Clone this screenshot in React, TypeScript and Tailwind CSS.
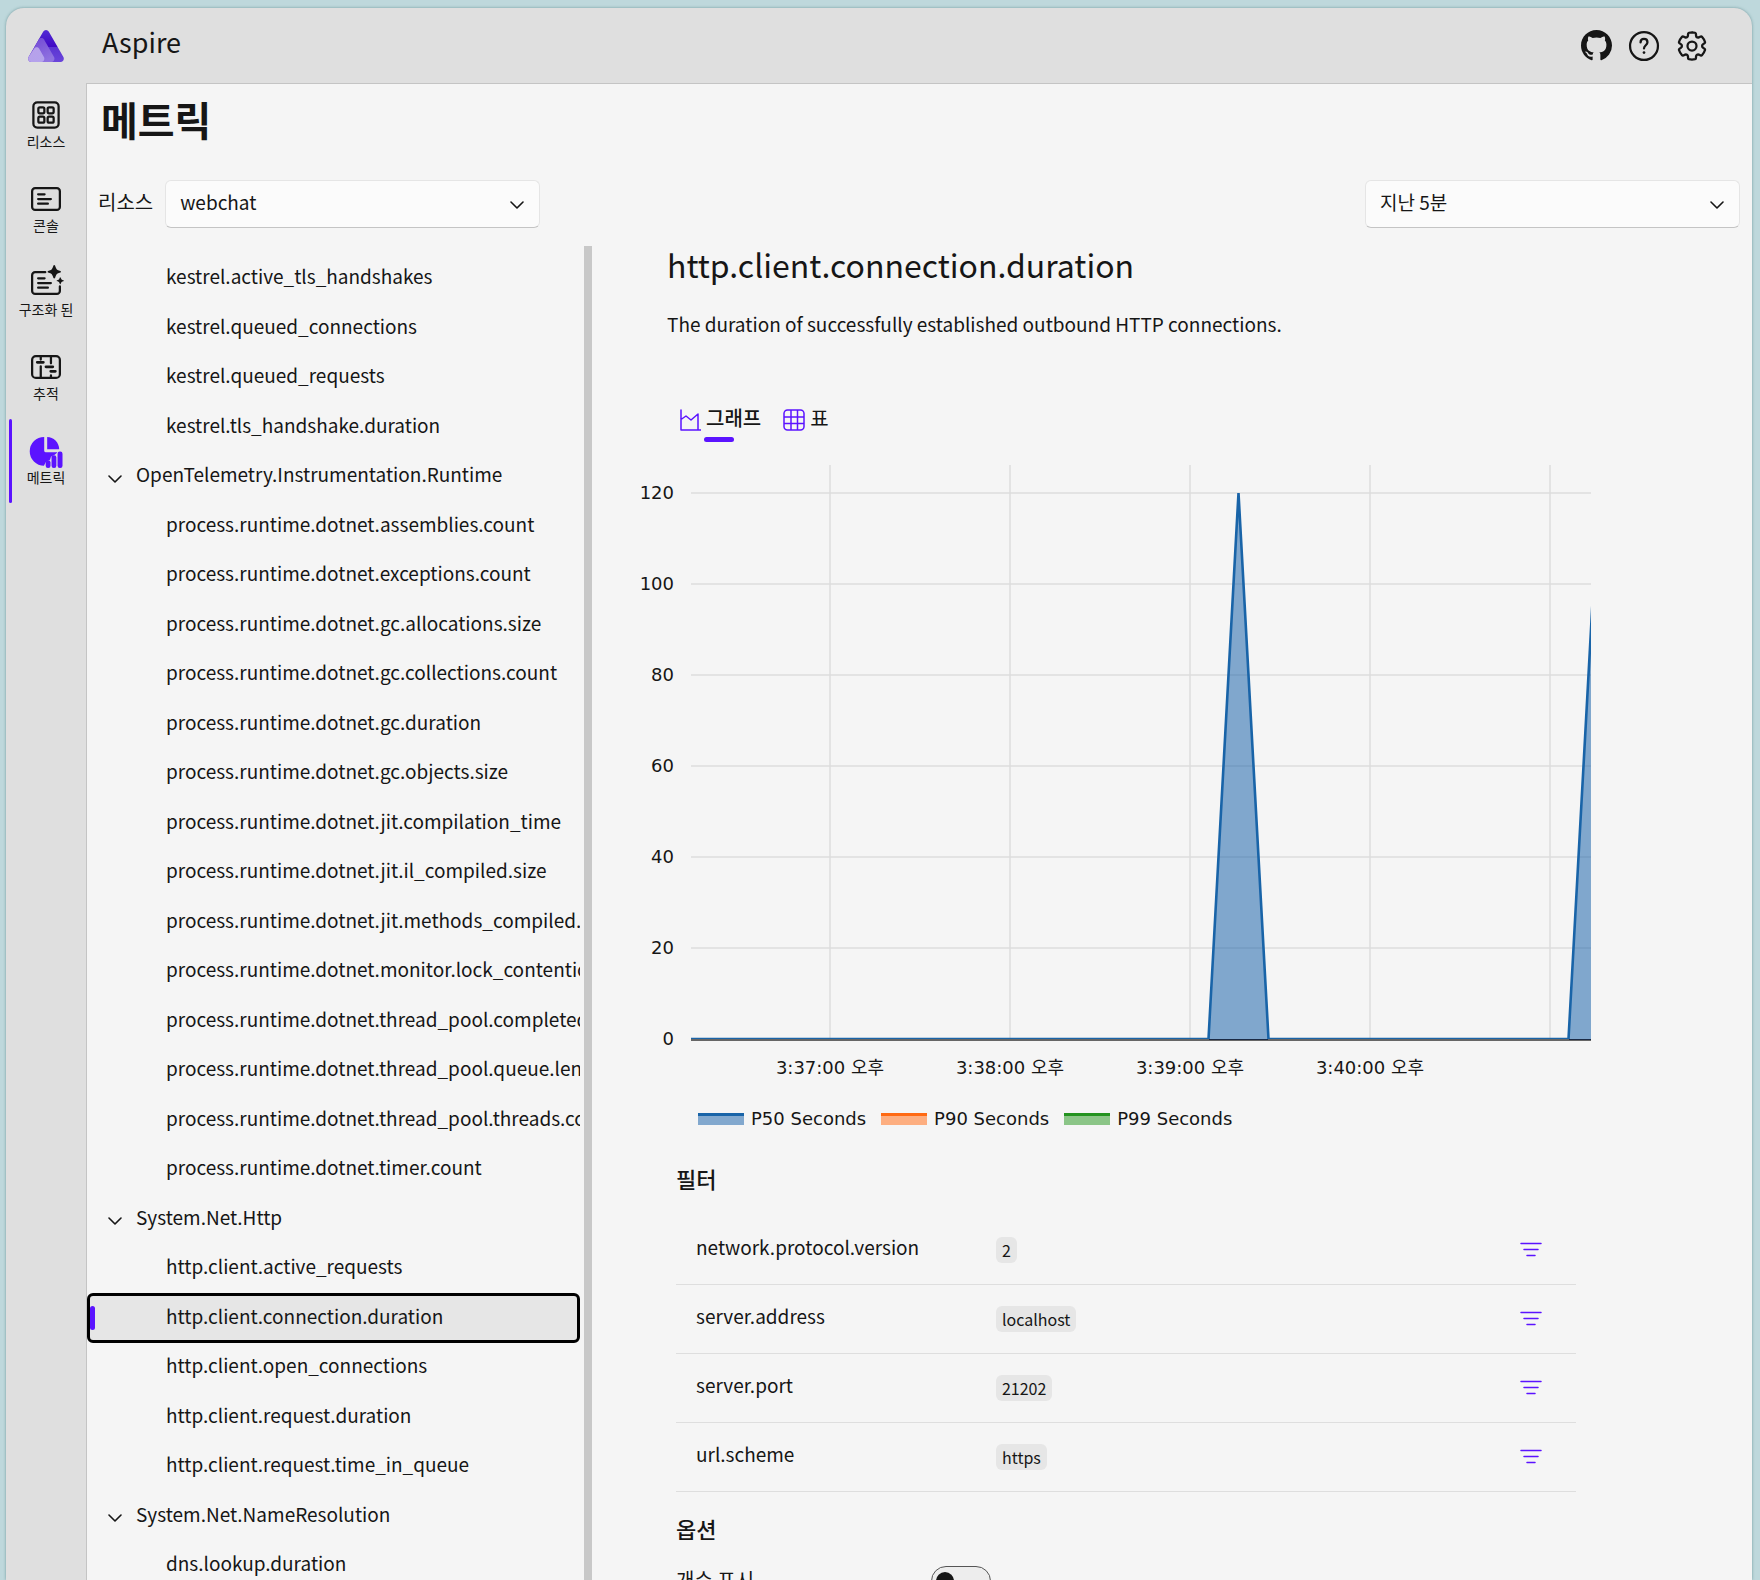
import type { ReactNode } from "react";
import { BsGithub } from "react-icons/bs";

type Row = { label: string; kind: "group" | "item"; selected?: boolean };

const group = (label: string): Row => ({ label, kind: "group" });
const item = (label: string, selected = false): Row => ({ label, kind: "item", selected });

const tree: Row[] = [
  item("kestrel.active_tls_handshakes"),
  item("kestrel.queued_connections"),
  item("kestrel.queued_requests"),
  item("kestrel.tls_handshake.duration"),
  group("OpenTelemetry.Instrumentation.Runtime"),
  item("process.runtime.dotnet.assemblies.count"),
  item("process.runtime.dotnet.exceptions.count"),
  item("process.runtime.dotnet.gc.allocations.size"),
  item("process.runtime.dotnet.gc.collections.count"),
  item("process.runtime.dotnet.gc.duration"),
  item("process.runtime.dotnet.gc.objects.size"),
  item("process.runtime.dotnet.jit.compilation_time"),
  item("process.runtime.dotnet.jit.il_compiled.size"),
  item("process.runtime.dotnet.jit.methods_compiled.count"),
  item("process.runtime.dotnet.monitor.lock_contention.count"),
  item("process.runtime.dotnet.thread_pool.completed_items.count"),
  item("process.runtime.dotnet.thread_pool.queue.length"),
  item("process.runtime.dotnet.thread_pool.threads.count"),
  item("process.runtime.dotnet.timer.count"),
  group("System.Net.Http"),
  item("http.client.active_requests"),
  item("http.client.connection.duration", true),
  item("http.client.open_connections"),
  item("http.client.request.duration"),
  item("http.client.request.time_in_queue"),
  group("System.Net.NameResolution"),
  item("dns.lookup.duration"),
];

const filters = [
  ["network.protocol.version", "2"],
  ["server.address", "localhost"],
  ["server.port", "21202"],
  ["url.scheme", "https"],
];

function Icon({ children, className = "size-9" }: { children: ReactNode; className?: string }) {
  return (
    <svg
      viewBox="0 0 24 24"
      className={className}
      fill="none"
      stroke="currentColor"
      strokeWidth="1.5"
      strokeLinecap="round"
      strokeLinejoin="round"
      aria-hidden="true"
    >
      {children}
    </svg>
  );
}

function Logo() {
  return (
    <svg viewBox="0 0 36 32" className="h-8 w-9" role="img" aria-label="Aspire">
      <defs>
        <linearGradient id="back" x1="0" y1="0" x2="0" y2="1">
          <stop offset="0" stopColor="#512bd4" />
          <stop offset="0.53" stopColor="#4008c4" />
          <stop offset="0.54" stopColor="#5b35d2" />
          <stop offset="1" stopColor="#6a45da" />
        </linearGradient>
        <linearGradient id="mid" x1="0" y1="0" x2="0.6" y2="1">
          <stop offset="0" stopColor="#6f45d8" />
          <stop offset="0.4" stopColor="#7c57d8" />
          <stop offset="1" stopColor="#8f72e0" />
        </linearGradient>
        <linearGradient id="front" x1="0" y1="0" x2="1" y2="1">
          <stop offset="0" stopColor="#b7a1ea" />
          <stop offset="1" stopColor="#b4a2ec" />
        </linearGradient>
      </defs>
      <path d="M15.3 1.6a3.1 3.1 0 0 1 5.4 0L35.4 27c1.2 2.2-.3 5-2.8 5H3.4C.9 32-.6 29.2.6 27z" fill="url(#back)" />
      <path d="M11 9.3c1.1-1.8 3.8-1.8 4.9 0L26 27c1.2 2.3-.2 5-2.6 5H3.4C.9 32-.6 29.2.6 27z" fill="url(#mid)" />
      <path d="M6.3 18.6c1.1-1.8 3.7-1.8 4.8 0L15.9 27c1.2 2.3-.2 5-2.6 5H3.4C.9 32-.6 29.2.6 27z" fill="url(#front)" />
    </svg>
  );
}

const ResourcesIcon = () => (
  <Icon>
    <rect x="3.6" y="3.6" width="16.8" height="16.8" rx="2.6" />
    <rect x="6.9" y="6.9" width="4" height="4" rx="1" />
    <rect x="13.1" y="6.9" width="4" height="4" rx="1" />
    <rect x="6.9" y="13.1" width="4" height="4" rx="1" />
    <rect x="13.1" y="13.1" width="4" height="4" rx="1" />
  </Icon>
);

const ConsoleIcon = () => (
  <Icon>
    <rect x="2.75" y="4.75" width="18.5" height="14.5" rx="2" />
    <path d="M6.75 8.9h4.3M6.75 12h8.5M6.75 15.1h6.5" />
  </Icon>
);

const StructuredIcon = () => (
  <Icon>
    <path d="M11.5 4.75H4.75a2 2 0 0 0-2 2v10.5a2 2 0 0 0 2 2h14.5a2 2 0 0 0 2-2v-3" />
    <path d="M6.75 8.9h4.3M6.75 12h8.5M6.75 15.1h6.5" />
    <path
      stroke="none"
      fill="currentColor"
      d="M17.5 0c.5 0 .6.5.8 1.100.5 1.400.9 2 2.300 2.500.8.300 1.400.4 1.400.9s-.6.600-1.400.9c-1.400.5-1.800 1.100-2.300 2.500-.2.600-.3 1.100-.8 1.100s-.6-.5-.8-1.100c-.5-1.400-.9-2-2.300-2.500C13.600 5.100 13 5 13 4.500s.6-.6 1.400-.9c1.400-.5 1.800-1.100 2.300-2.500.2-.6.300-1.100.8-1.100zM21.500 8.100c.3 0 .4.600.6 1.100s.4.600.9.800.9.200.9.500-.4.300-.9.500-.7.300-.9.800-.3 1.100-.6 1.100-.4-.6-.6-1.100-.4-.6-.9-.8-.9-.2-.9-.5.400-.3.900-.5.700-.3.900-.8.300-1.100.6-1.100z"
    />
  </Icon>
);

const TracesIcon = () => (
  <Icon>
    <rect x="2.75" y="4.75" width="18.5" height="14.5" rx="2.5" />
    <path d="M8.5 5v2M8.5 11.500V19M15.300 5v4.500M15.300 17.500V19" />
    <path d="M6.200 8.900h4M12 11.900h4.500M15.200 14.900h3" strokeWidth="1.900" />
  </Icon>
);

const MetricsIcon = () => (
  <Icon>
    <g stroke="none" fill="currentColor">
      <path d="M10.8 2.600v9.300c0 .5.400.9.900.9h7.900l-.4.500-1.400 1.200-2.500 1.300-.6 2-2.600 1.200-1.400 2.700v.1A9.600 9.600 0 0 1 10.800 2.600z" />
      <path d="M12.800 2.600c4.200 0 7.900 3.500 8 8.200h-8z" />
      <rect x="11.800" y="18.200" width="3.200" height="5.200" rx="1.500" />
      <rect x="15.700" y="14.900" width="3.200" height="8.500" rx="1.500" />
      <rect x="19.700" y="12.300" width="3.300" height="11.100" rx="1.500" />
    </g>
  </Icon>
);

const navItems = [
  { label: "리소스", icon: <ResourcesIcon /> },
  { label: "콘솔", icon: <ConsoleIcon /> },
  { label: "구조화 된", icon: <StructuredIcon /> },
  { label: "추적", icon: <TracesIcon /> },
  { label: "메트릭", icon: <MetricsIcon />, active: true },
];

function SideNav() {
  return (
    <nav className="flex w-20 shrink-0 flex-col">
      {navItems.map((n) => (
        <a
          key={n.label}
          href="#"
          aria-current={n.active ? "page" : undefined}
          className="relative flex h-[84px] flex-col items-center pt-[14px]"
        >
          {n.active && <span className="absolute top-0 left-[3px] h-full w-[3px] rounded-full bg-[#5b13ff]" />}
          <span className={n.active ? "text-[#5b13ff]" : ""}>{n.icon}</span>
          <span className="text-sm leading-4 whitespace-nowrap">{n.label}</span>
        </a>
      ))}
    </nav>
  );
}

function Chevron() {
  return (
    <svg viewBox="0 0 14 8" className="h-2 w-3.5" fill="none" stroke="currentColor" strokeWidth="1.6" strokeLinecap="round" strokeLinejoin="round" aria-hidden="true">
      <path d="M1 1l6 6 6-6" />
    </svg>
  );
}

function Select({ id, value, label }: { id: string; value: string; label?: string }) {
  return (
    <div className="relative h-12 w-[375px]">
      <select
        id={id}
        aria-label={label}
        className="h-full w-full appearance-none rounded-md border border-[#e5e5e5] border-b-[#c4c4c4] bg-[#fbfbfb] pr-10 pb-1 pl-3.5 text-[19px]"
      >
        <option>{value}</option>
      </select>
      <span className="pointer-events-none absolute top-[21px] right-4">
        <Chevron />
      </span>
    </div>
  );
}

function Tree() {
  return (
    <ul className="w-[497px] shrink-0 overflow-hidden pt-2 pr-1 text-[19px]">
      {tree.map((r) => (
        <li key={r.label} className="h-[49px] even:h-[50px]">
          {r.kind === "group" ? (
            <button type="button" aria-expanded="true" className="flex h-full w-full items-center gap-[14px] pl-[21px] text-left">
              <span className="pt-1">
                <Chevron />
              </span>
              <span className="pb-1 whitespace-nowrap">{r.label}</span>
            </button>
          ) : r.selected ? (
            <button
              type="button"
              aria-current="true"
              className="relative flex h-full w-full items-center overflow-hidden rounded-md border-[3px] border-black bg-[#e6e6e6] pl-[76px] text-left"
            >
              <span className="absolute left-0 h-6 w-[5px] rounded-sm bg-[#5b13ff]" />
              <span className="pb-1 whitespace-nowrap">{r.label}</span>
            </button>
          ) : (
            <button type="button" className="flex h-full w-full items-center overflow-hidden pl-[79px] text-left">
              <span className="pb-1 whitespace-nowrap">{r.label}</span>
            </button>
          )}
        </li>
      ))}
    </ul>
  );
}

const LEFT = 59;
const RIGHT = 959;
const BASE = 574;
const yTicks = [0, 20, 40, 60, 80, 100, 120];
const xTicks = [
  { x: 198, label: "3:37:00 오후" },
  { x: 378, label: "3:38:00 오후" },
  { x: 558, label: "3:39:00 오후" },
  { x: 738, label: "3:40:00 오후" },
  { x: 918, label: "" },
];
const yOf = (v: number) => BASE - v * 4.55;

function Chart() {
  return (
    <svg
      viewBox="0 0 960 620"
      className="block w-full font-['DejaVu_Sans','Noto_Sans_CJK_KR',sans-serif] text-lg"
      role="img"
      aria-label="http.client.connection.duration"
    >
      <defs>
        <clipPath id="plot">
          <rect x={LEFT} y="0" width={RIGHT - LEFT} height="577" />
        </clipPath>
      </defs>
      <g stroke="#dddddd" strokeWidth="1.5">
        {xTicks.map((t) => (
          <path key={t.x} d={`M${t.x} 0V${BASE}`} />
        ))}
        {yTicks.slice(1).map((v) => (
          <path key={v} d={`M${LEFT} ${yOf(v)}H${RIGHT}`} />
        ))}
      </g>
      <g clipPath="url(#plot)">
        <path d="M576.5 574L606.5 28L636.5 574zM936.5 574L966.5 28V574z" fill="#1f66ab" fillOpacity="0.55" />
        <path
          d="M59 574H576.5L606.5 28L636.5 574H936.5L966.5 28"
          fill="none"
          stroke="#1964a8"
          strokeWidth="2.6"
          strokeLinejoin="bevel"
        />
        <path d="M59 575H959" stroke="#666666" strokeWidth="2" />
        <path d="M577 574.5H636M937 574.5H959" stroke="#1b2a44" strokeWidth="1" />
      </g>
      <g fill="#161616">
        {yTicks.map((v) => (
          <text key={v} x="42" y={yOf(v) + 6} textAnchor="end">
            {v}
          </text>
        ))}
        {xTicks.map((t) => (
          <text key={t.x} x={t.x} y="609" textAnchor="middle">
            {t.label}
          </text>
        ))}
      </g>
    </svg>
  );
}

const legend = [
  { label: "P50 Seconds", style: "border-[#1964a8] bg-[#82a8ce]" },
  { label: "P90 Seconds", style: "border-[#ff6a13] bg-[#fdae80]" },
  { label: "P99 Seconds", style: "border-[#23931f] bg-[#8bc587]" },
];

function Filters() {
  return (
    <table className="mt-[21px] w-full text-[19px]">
      <tbody>
        {filters.map(([name, value]) => (
          <tr key={name} className="h-[69px] border-b border-[#dedede]">
            <th scope="row" className="w-1/3 pb-1 pl-5 text-left font-normal">
              {name}
            </th>
            <td className="pl-5">
              <span className="inline-block rounded-md bg-[#e6e6e6] px-1.5 text-base leading-[26px]">{value}</span>
            </td>
            <td className="w-20 pr-[33px] pb-1 text-right">
              <button type="button" aria-label={`${name} 필터`} className="align-middle text-[#5b13ff]">
                <svg viewBox="0 0 24 18" className="h-[18px] w-6" fill="none" stroke="currentColor" strokeWidth="1.5" strokeLinecap="round">
                  <path d="M2 2.5h20M5 8.500h14M8 14.500h8" />
                </svg>
              </button>
            </td>
          </tr>
        ))}
      </tbody>
    </table>
  );
}

function Detail() {
  return (
    <section className="min-w-0 flex-1 overflow-hidden pl-10">
      <div className="pl-[35px]">
        <h2 className="text-[32px] leading-9">http.client.connection.duration</h2>
        <p className="mt-7 text-[19px] leading-7">The duration of successfully established outbound HTTP connections.</p>
      </div>
      <div role="tablist" className="mt-16 flex gap-[22px] pl-[47px]">
        <button type="button" role="tab" aria-selected="true" className="relative flex h-10 items-center gap-[5px] pb-2 font-medium">
          <svg viewBox="0 0 22 22" className="mt-1 size-[22px] text-[#5b13ff]" fill="none" stroke="currentColor" strokeWidth="1.5" strokeLinecap="round" strokeLinejoin="round" aria-hidden="true">
            <path d="M2 1v20h20M2 10.500l5-3.500 5 4 7-6v15.500" />
          </svg>
          그래프
          <span className="absolute bottom-0 left-[25px] h-[5px] w-[30px] rounded-full bg-[#5b13ff]" />
        </button>
        <button type="button" role="tab" aria-selected="false" className="flex h-10 items-center gap-[5px] pb-2">
          <svg viewBox="0 0 22 22" className="mt-1 size-[22px] text-[#5b13ff]" fill="none" stroke="currentColor" strokeWidth="1.5" aria-hidden="true">
            <rect x="1" y="1" width="20" height="20" rx="3.5" />
            <path d="M8 1v20M14.500 1v20M1 8h20M1 14.500h20" />
          </svg>
          표
        </button>
      </div>
      <div className="mt-[23px] max-w-[960px]">
        <Chart />
        <ul className="mt-[22px] flex gap-[15px] pl-[66px] font-['DejaVu_Sans',sans-serif] text-lg leading-6">
          {legend.map((l) => (
            <li key={l.label} className="flex items-center gap-[7px]">
              <span className={`h-3 w-[46px] border-t-[3px] ${l.style}`} />
              {l.label}
            </li>
          ))}
        </ul>
        <div className="mr-4 pl-11">
          <h3 className="mt-[31px] text-[22px] leading-8 font-medium">필터</h3>
          <Filters />
          <h3 className="mt-5 text-[22px] leading-8 font-medium">옵션</h3>
          <div className="mt-[22px] flex">
            <label htmlFor="count" className="w-[255px] leading-7">
              개수 표시
            </label>
            <span className="relative">
              <input
                id="count"
                type="checkbox"
                role="switch"
                className="block h-[30px] w-[60px] appearance-none rounded-full border border-[#555] bg-[#ededed]"
              />
              <span className="pointer-events-none absolute top-[6px] left-[5px] size-[18px] rounded-full bg-[#161616]" />
            </span>
          </div>
        </div>
      </div>
    </section>
  );
}

export default function App() {
  return (
    <div className="h-screen overflow-hidden bg-[#bed8dc] pt-2 pr-2 pl-1.5 font-['Noto_Sans_CJK_KR',sans-serif] text-xl text-[#161616]">
      <div className="flex h-full flex-col overflow-hidden rounded-t-[18px] bg-[#dfdfdf] shadow-[0_0_3px_rgba(60,110,115,0.6)]">
        <header className="flex h-[75px] shrink-0 items-center">
          <div className="flex w-20 justify-center">
            <Logo />
          </div>
          <a href="#" className="pb-2 pl-4 text-[27px] leading-9">
            Aspire
          </a>
          <div className="ml-auto flex items-center gap-3 pr-[42px]">
            <a href="#" aria-label="GitHub" className="flex size-9 items-center justify-center">
              <BsGithub className="size-[31px]" />
            </a>
            <button type="button" aria-label="도움말">
              <Icon>
                <circle cx="12" cy="12" r="9.3" />
                <path d="M9.700 9.600c0-1.500 1-2.300 2.300-2.300s2.300.9 2.300 2.200c0 1.900-2.300 2.100-2.300 4.100" />
                <circle cx="12" cy="16.400" r=".9" fill="currentColor" stroke="none" />
              </Icon>
            </button>
            <button type="button" aria-label="설정">
              <Icon>
                <g transform="translate(12 12) scale(.93) translate(-12 -12)">
                  <path
                    strokeWidth="1.65"
                    d="M12.012 2.250c.734.008 1.465.093 2.182.253.313.070.547.330.582.649l.170 1.527c.077.701.669 1.232 1.375 1.233.190 0 .377-.040.552-.117l1.401-.615c.291-.128.632-.059.849.174 1.012 1.081 1.766 2.377 2.205 3.792.095.305-.014.636-.271.826l-1.242.915c-.354.260-.563.673-.563 1.113s.209.852.564 1.113l1.242.915c.257.190.366.521.272.826-.439 1.414-1.192 2.711-2.204 3.792-.217.232-.557.302-.849.174l-1.406-.616c-.402-.176-.864-.150-1.244.070-.380.220-.633.607-.682 1.044l-.169 1.526c-.035.315-.264.574-.572.647-1.448.345-2.957.345-4.406 0-.308-.073-.537-.332-.572-.647l-.169-1.524c-.050-.436-.303-.822-.683-1.041s-.841-.245-1.242-.070l-1.407.616c-.291.128-.631.058-.849-.175-1.012-1.082-1.765-2.380-2.203-3.796-.094-.305.015-.636.272-.825l1.243-.916c.354-.260.563-.673.563-1.113s-.209-.852-.563-1.113l-1.243-.915c-.257-.189-.366-.521-.272-.826.439-1.414 1.193-2.711 2.205-3.792.217-.232.558-.302.849-.174l1.400.615c.403.177.866.150 1.248-.073.380-.221.633-.609.682-1.045l.170-1.526c.036-.319.270-.580.583-.649.717-.160 1.449-.245 2.201-.253z"
                  />
                </g>
                <circle cx="12" cy="12" r="3" />
              </Icon>
            </button>
          </div>
        </header>
        <div className="flex min-h-0 flex-1">
          <SideNav />
          <main className="flex min-w-0 flex-1 flex-col border-t border-l border-[#c4c4c4] bg-[#f5f5f5]">
            <h1 className="mt-3 pl-3.5 text-[40px] leading-[46px] font-bold">메트릭</h1>
            <div className="mt-[38px] flex items-center pr-3 pl-[11px]">
              <label htmlFor="resource" className="mr-3 pb-1">
                리소스
              </label>
              <Select id="resource" value="webchat" />
              <div className="ml-auto">
                <Select id="range" value="지난 5분" label="기간" />
              </div>
            </div>
            <div className="mt-[18px] flex min-h-0 flex-1">
              <Tree />
              <div className="w-2 shrink-0 bg-[#c8c8c8]" />
              <Detail />
            </div>
          </main>
        </div>
      </div>
    </div>
  );
}
